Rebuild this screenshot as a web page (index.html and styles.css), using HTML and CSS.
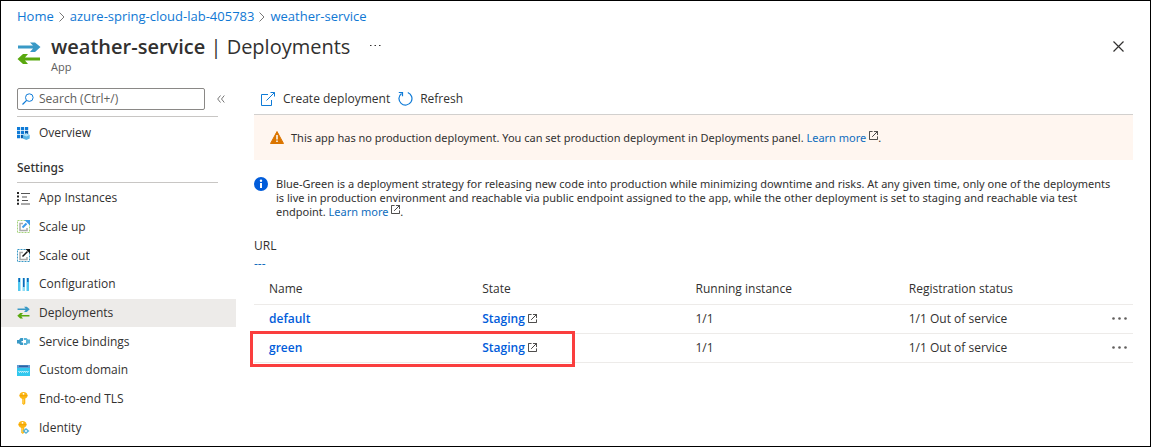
FILE: index.html
```html
<!DOCTYPE html>
<html lang="en">
<head>
<meta charset="utf-8">
<meta name="viewport" content="width=device-width, initial-scale=1">
<title>weather-service | Deployments</title>
<link rel="stylesheet" href="styles.css">
</head>
<body>
<svg width="0" height="0" class="sprite" aria-hidden="true">
  <symbol id="swap" viewBox="0 0 24 24">
    <path d="M1 4.500h15L13 1.500h5L23.500 6 18 11h-5l3-3.500H1z" fill="#3999c6"/>
    <path d="M23 16.500H8l3-3.500H6L.5 18 6 23h5l-3-3.500h15z" fill="#59a80f"/>
  </symbol>
  <symbol id="external" viewBox="0 0 10 10">
    <path d="M4 .5H.5v9h9V6M5.500.5h4v4M9.500.5l-6 6" fill="none" stroke="currentColor"/>
  </symbol>
  <symbol id="key" viewBox="0 0 13 13">
    <path d="M6.500 0C9 0 10.500 1.500 10.500 3.500c0 1.500-.9 2.600-2.200 3.100v5L6.800 13 5 11.500V6.700C3.500 6.200 2.500 5.100 2.500 3.500 2.500 1.500 4 0 6.500 0z" fill="#fcb714"/>
    <path d="M2.500 3.200h8v1h-8z" fill="#f0a000"/><circle cx="6.500" cy="1.800" r=".9" fill="#fff"/><path d="M6 7v4.500" stroke="#ffe08a"/>
  </symbol>
</svg>

<nav class="breadcrumb" aria-label="Breadcrumb">
  <a href="#">Home</a>
  <svg width="6" height="10" viewBox="0 0 6 10"><path d="M.5.5 5 5 .5 9.500" fill="none" stroke="#777"/></svg>
  <a href="#">azure-spring-cloud-lab-405783</a>
  <svg width="6" height="10" viewBox="0 0 6 10"><path d="M.5.5 5 5 .5 9.500" fill="none" stroke="#777"/></svg>
  <a href="#">weather-service</a>
</nav>

<header class="header">
  <svg class="header-icon" width="24" height="26"><use href="#swap"/></svg>
  <div class="header-text">
    <h1><strong>weather-service</strong> | Deployments</h1>
    <p>App</p>
  </div>
  <button class="icon-button more" aria-label="More"><svg width="11" height="2" viewBox="0 0 11 2"><path d="M0 .5h1.500M4.500.5H6M9 .5h1.500" stroke="#323130"/></svg></button>
  <button class="icon-button close" aria-label="Close"><svg width="11" height="11" viewBox="0 0 11 11"><path d="m.5.5 10 10m0-10-10 10" stroke="#323130" stroke-width="1.200"/></svg></button>
</header>

<div class="layout">
  <aside class="sidebar">
    <div class="search-row">
      <label class="search">
        <svg width="12" height="12" viewBox="0 0 12 12"><circle cx="7.300" cy="4.600" r="3.800" fill="none" stroke="#0f7bd7"/><path d="M4.600 7.400.5 11.500" stroke="#0f7bd7" stroke-width="1.200"/></svg>
        <input type="text" placeholder="Search (Ctrl+/)" aria-label="Search">
      </label>
      <button class="icon-button collapse" aria-label="Collapse menu"><svg width="8" height="8" viewBox="0 0 8 8"><path d="M3.500.5.7 4l2.800 3.500M7.300.5 4.500 4l2.800 3.500" fill="none" stroke="#777"/></svg></button>
    </div>
    <a class="item overview" href="#">
      <svg width="13" height="13" viewBox="0 0 13 13"><path d="M0 0h3.200v3.200H0zM4 0h3.200v3.200H4zM8 0h3.200v3.200H8zM0 4h3.200v3.200H0zM4 4h3.200v3.200H4zM0 8h3.200v3.200H0z" fill="#0f7bd7"/><path d="M8 4h3.200v3.200H8zM4 8h3.200v3.200H4z" fill="#075aa8"/><path d="m9.300 6.300 3.400 1.600v3.500L9.300 13l-3.400-1.600V7.900z" fill="#5ab4e5"/><path d="m9.300 6.300 3.400 1.600-3.400 1.500-3.400-1.500z" fill="#b2e2f7"/></svg>
      Overview
    </a>
    <h2>Settings</h2>
    <ul class="menu">
      <li><a class="item" href="#"><svg width="13" height="13" viewBox="0 0 13 13"><path d="M1 0v13" stroke="#222" stroke-width="2" stroke-dasharray="2 1.600"/><path d="M4 1.500h9M5 5h5M5 8.500h6M4 12h9" stroke="#555"/></svg>App Instances</a></li>
      <li><a class="item" href="#"><svg width="13" height="13" viewBox="0 0 13 13"><path d="M.5.5h12v12H.5z" fill="none" stroke="#a5d37c" stroke-dasharray="2 1"/><path d="M6 3.500H3v7h7V8" fill="none" stroke="#aaa" stroke-width="1.500"/><path d="m5.500 7.500 4-4" stroke="#3b9be8" stroke-width="2"/><path d="M7.500 0H13v5.500z" fill="#3b9be8"/></svg>Scale up</a></li>
      <li><a class="item" href="#"><svg width="13" height="13" viewBox="0 0 13 13"><path d="M.5.5h12v12H.5z" fill="none" stroke="#3999c6" stroke-dasharray="2 1"/><path d="M6 3.500H3v7h7V8" fill="none" stroke="#aaa" stroke-width="1.500"/><path d="m5.500 7.500 5-5" stroke="#111" stroke-width="1.500"/><path d="M8.500 0H13v4.500z" fill="#111"/></svg>Scale out</a></li>
      <li><a class="item" href="#"><svg width="13" height="13" viewBox="0 0 13 13"><path d="M1 0h2.500v13H1z" fill="#50c8f0"/><path d="M5.500 0H8v13H5.500z" fill="#8edcf5"/><path d="M9.500 0H12v13H9.500z" fill="#50c8f0"/><path d="M1.500 0h1.500v4H1.500zM6 0h1.500v9H6zM10 0h1.500v4H10z" fill="#0f66b7"/></svg>Configuration</a></li>
      <li><a class="item current" href="#" aria-current="page"><svg width="13" height="13"><use href="#swap"/></svg>Deployments</a></li>
      <li><a class="item" href="#"><svg width="13" height="13" viewBox="0 0 13 13"><path d="M0 5h2l1.500-2H6v3H4.500v1.500H6V10H3.500L2 8.500H0z" fill="#3999c6"/><path d="M13 4.500h-2L9.500 3H6.800v2H9v3H6.800v2h2.700L11 8.500h2z" fill="#59b4d9"/></svg>Service bindings</a></li>
      <li><a class="item" href="#"><svg width="13" height="13" viewBox="0 0 13 13"><path d="M0 1h13v11H0z" fill="#32c8ee"/><path d="M0 1h13v3H0z" fill="#5e9bd3"/><path d="M2 1.500h9v1.500H2z" fill="#2d62a3"/><path d="m1.500 7 1 1.500 1-1.500 1 1.500 1-1.500 1 1.500 1-1.500 1 1.500 1-1.500 1 1.500 1-1.500" fill="none" stroke="#d9f6ff" stroke-width=".9"/></svg>Custom domain</a></li>
      <li><a class="item" href="#"><svg width="13" height="13"><use href="#key"/></svg>End-to-end TLS</a></li>
      <li><a class="item" href="#"><svg width="13" height="13" viewBox="0 0 13 13"><use href="#key" x="-1" width="13" height="13"/><path d="m9 7 3.500 3L9 13l-3.500-3z" fill="#59b4d9"/><circle cx="9" cy="10" r="1" fill="#fff"/></svg>Identity</a></li>
    </ul>
  </aside>

  <main class="content">
    <div class="toolbar">
      <button class="command"><svg width="15" height="14" viewBox="0 0 15 14"><path d="M7 2.500H.5v11h10V8M9.500.5h4v4M13.500.5l-8 8" fill="none" stroke="#0f7bd7"/></svg>Create deployment</button>
      <button class="command"><svg width="15" height="15" viewBox="0 0 15 15"><path d="M9.800 1.500A6.500 6.500 0 1 1 3.500 2.400M.8 1.500h3.700v3.700" fill="none" stroke="#0f7bd7" stroke-width="1.200"/></svg>Refresh</button>
    </div>
    <div class="warning">
      <svg width="14" height="13" viewBox="0 0 14 13"><path d="M7 .5 13.500 12.500H.5z" fill="#db7500" stroke="#db7500" stroke-linejoin="round"/><path d="M7 4v4.500M7 9.500V11" stroke="#fff" stroke-width="1.500"/></svg>
      <p>This app has no production deployment. You can set production deployment in Deployments panel. <a href="#">Learn more</a> <svg class="raised" width="9" height="9"><use href="#external"/></svg>.</p>
    </div>
    <div class="info">
      <svg width="14" height="14" viewBox="0 0 14 14"><circle cx="7" cy="7" r="7" fill="#015cda"/><path d="M7 6v5" stroke="#fff" stroke-width="2"/><circle cx="7" cy="3.700" r="1.200" fill="#fff"/></svg>
      <p>Blue-Green is a deployment strategy for releasing new code into production while minimizing downtime and risks. At any given time, only one of the deployments is live in production environment and reachable via public endpoint assigned to the app, while the other deployment is set to staging and reachable via test endpoint. <a href="#">Learn more</a> <svg class="raised" width="9" height="9"><use href="#external"/></svg>.</p>
    </div>
    <div class="url"><span>URL</span><a href="#">---</a></div>
    <table class="deployments">
      <thead>
        <tr><th>Name</th><th>State</th><th>Running instance</th><th>Registration status</th><th class="actions"></th></tr>
      </thead>
      <tbody>
        <tr>
          <td><a href="#">default</a></td>
          <td><a href="#">Staging</a> <svg width="9" height="9"><use href="#external"/></svg></td>
          <td>1/1</td><td>1/1 Out of service</td>
          <td class="actions"><button class="icon-button" aria-label="Actions for default"><svg width="15" height="3" viewBox="0 0 15 3"><g fill="#605e5c"><circle cx="1.500" cy="1.500" r="1.300"/><circle cx="7.500" cy="1.500" r="1.300"/><circle cx="13.500" cy="1.500" r="1.300"/></g></svg></button></td>
        </tr>
        <tr>
          <td class="marked"><a href="#">green</a></td>
          <td><a href="#">Staging</a> <svg width="9" height="9"><use href="#external"/></svg></td>
          <td>1/1</td><td>1/1 Out of service</td>
          <td class="actions"><button class="icon-button" aria-label="Actions for green"><svg width="15" height="3" viewBox="0 0 15 3"><g fill="#605e5c"><circle cx="1.500" cy="1.500" r="1.300"/><circle cx="7.500" cy="1.500" r="1.300"/><circle cx="13.500" cy="1.500" r="1.300"/></g></svg></button></td>
        </tr>
      </tbody>
    </table>
  </main>
</div>
</body>
</html>
```
FILE: styles.css
```css
* { box-sizing: border-box; }

body {
  display: flex;
  flex-direction: column;
  min-height: 100vh;
  margin: 0;
  border: 1px solid #000;
  background: #fff;
  color: #323130;
  font: 12px/16px "Open Sans", "Noto Sans", sans-serif;
}

h1, h2, p, ul { margin: 0; padding: 0; }
a { color: #0f6cbd; text-decoration: none; }
svg { flex: none; }
.sprite { position: absolute; }

button {
  padding: 0;
  border: 0;
  background: none;
  color: inherit;
  font: inherit;
  cursor: pointer;
}
.icon-button { display: inline-flex; align-items: center; justify-content: center; }

.breadcrumb { display: flex; align-items: center; gap: 5px; padding: 7px 16px 0; font-size: 13px; line-height: 17px; }
.breadcrumb a { color: #0f78d4; }

.header { display: flex; align-items: flex-start; padding: 8px 26px 0 16px; }
.header-icon { margin-top: 7px; }
.header-text { margin-left: 10px; }
.header h1 { font-size: 20px; line-height: 27px; font-weight: 400; }
.header h1 strong { font-weight: 600; }
.header p { color: #605e5c; font-size: 11px; line-height: 14px; }
.more { height: 26px; margin-left: 20px; }
.close { height: 27px; margin-left: auto; }

.layout { display: flex; flex: 1; }

.sidebar { display: flex; flex-direction: column; width: 235px; padding: 14px 0 4px; flex: none; }
.search-row { display: flex; align-items: center; gap: 12px; padding-left: 16px; }
.search {
  display: flex;
  align-items: center;
  gap: 5px;
  width: 188px;
  height: 22px;
  padding: 0 4px;
  border: 1px solid #8a8886;
  border-radius: 2px;
}
.search input {
  flex: 1;
  min-width: 0;
  padding: 0;
  border: 0;
  outline: 0;
  background: none;
  color: inherit;
  font: inherit;
}
.search input::placeholder { color: #605e5c; opacity: 1; }

.item { display: flex; align-items: center; gap: 9px; height: 100%; padding-left: 16px; color: #323130; }
.item.overview { height: 34px; position: relative; margin-top: 6px; }
.item.overview::before { content: ""; position: absolute; top: 0; left: 16px; right: 18px; border-top: 1px solid #c8c6c4; }
.sidebar h2 {
  height: 33px;
  margin: 0 18px 1px 16px;
  padding-top: 10px;
  border-bottom: 1px solid #c8c6c4;
  font: 500 12px/16px "Noto Sans", "Open Sans", sans-serif;
}
.menu { display: grid; grid-auto-rows: 1fr; flex: 1; list-style: none; }
.current { background: #edebe9; }

.content { flex: 1; min-width: 0; padding: 12px 17px 0 18px; }
.toolbar { display: flex; gap: 8px; height: 29px; padding: 0 7px 3px; border-bottom: 1px solid #d2d0ce; }
.command { display: flex; align-items: center; gap: 7px; }

.warning { display: flex; align-items: center; gap: 7px; height: 45px; padding: 0 16px; background: #fff6f0; }
.warning, .info { font-family: "Noto Sans", "Open Sans", sans-serif; font-size: 11px; line-height: 14px; }
.raised { vertical-align: 2px; }
.info { display: flex; gap: 8px; margin-top: 17px; padding-right: 16px; }

.url { display: flex; flex-direction: column; margin-top: 19px; }
.url a { line-height: 20px; }

.deployments { width: 100%; border-collapse: collapse; table-layout: fixed; }
.deployments th, .deployments td {
  height: 29px;
  padding: 0 0 0 15px;
  border-bottom: 1px solid #edebe9;
  text-align: left;
}
.deployments th { height: 30px; font-weight: 500; }
.deployments td a { color: #015cda; font-weight: 600; }
.deployments .actions { width: 26px; padding: 0 6px 0 0; text-align: right; }
.deployments .actions button { height: 16px; vertical-align: middle; }

.marked { position: relative; }
.marked::after {
  content: "";
  position: absolute;
  top: -3px;
  bottom: -5px;
  left: -4px;
  width: 319px;
  border: 3px solid #fa3e3e;
  pointer-events: none;
}
```
